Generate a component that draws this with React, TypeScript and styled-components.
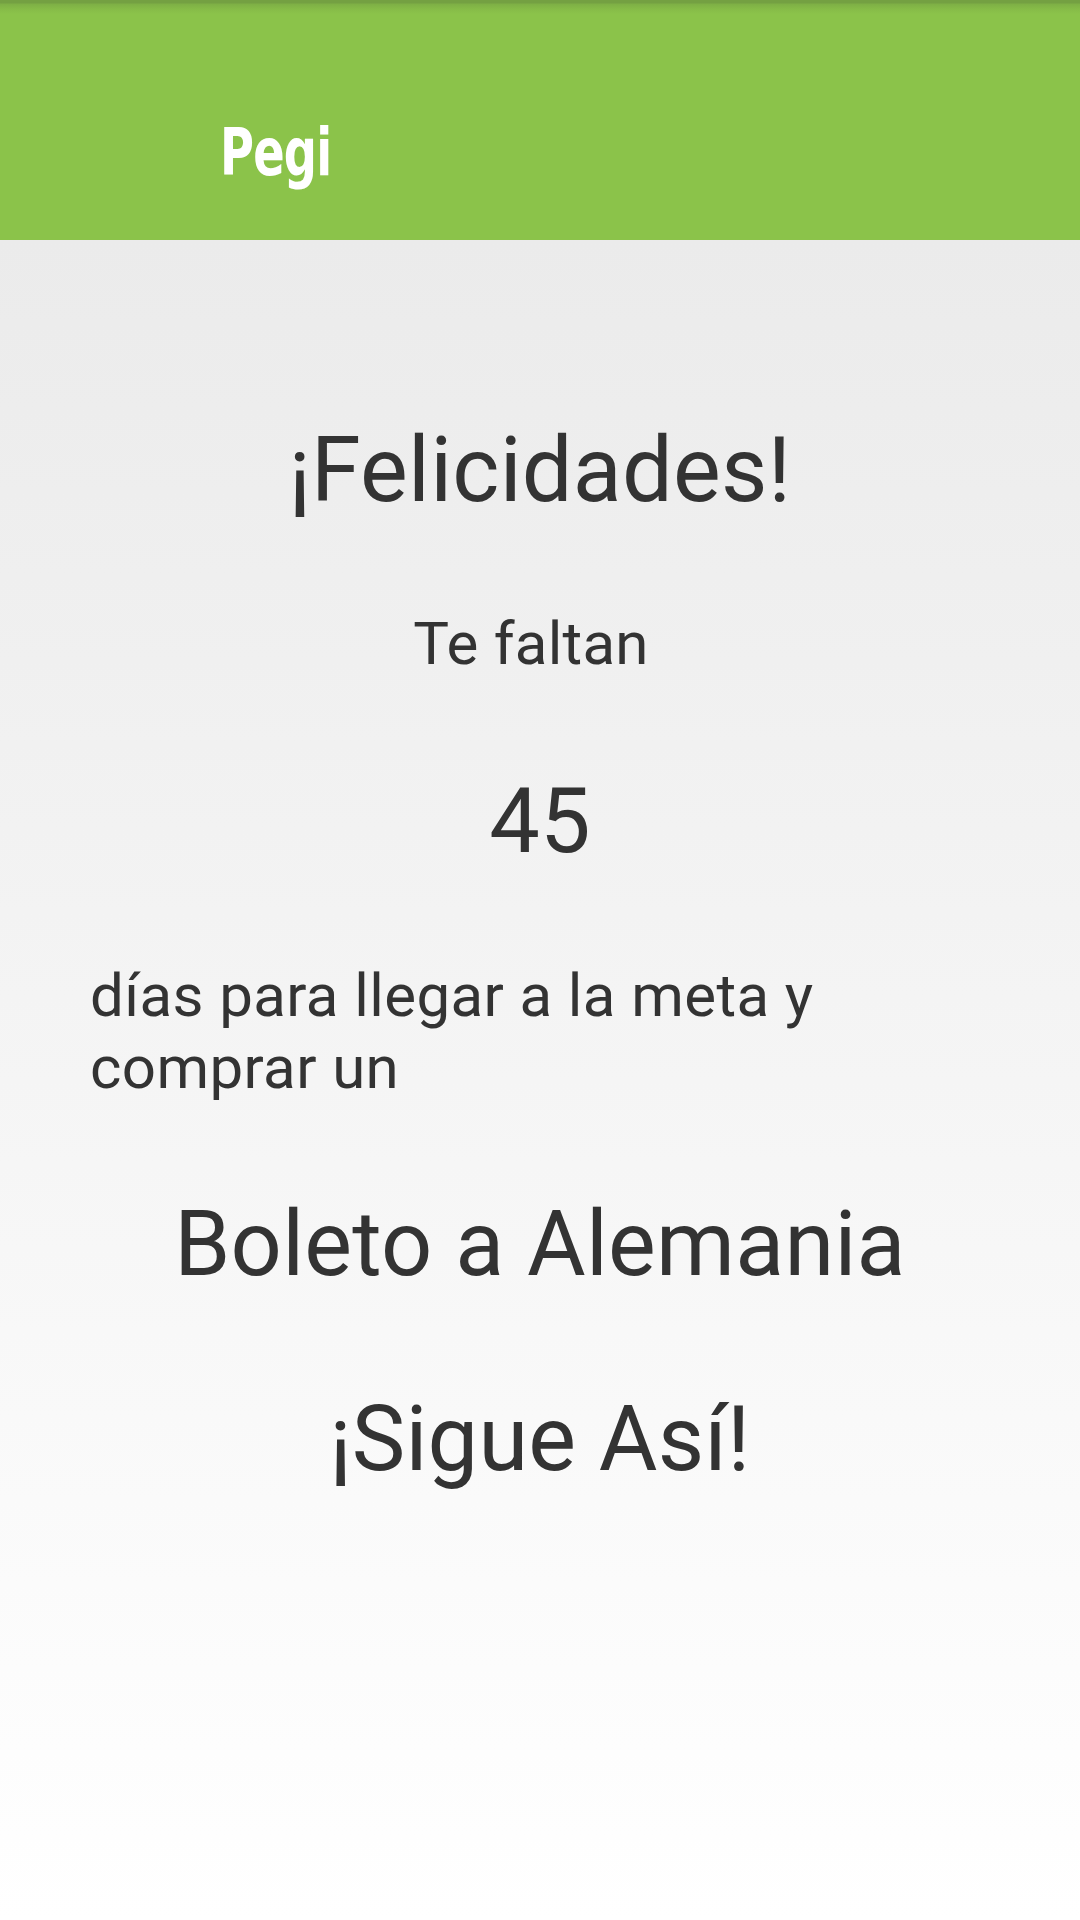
import React from "react";
import styled, { createGlobalStyle } from "styled-components";

const GlobalStyle = createGlobalStyle`
  html, body {
    margin: 0;
    padding: 0;
  }
  body {
    width: 1080px;
    font-family: Roboto, "Liberation Sans", sans-serif;
  }
`;

const Screen = styled.div`
  width: 1080px;
  height: 1920px;
  overflow: hidden;
  display: flex;
  flex-direction: column;
  background: #ffffff;
`;

const ActionBar = styled.header`
  box-sizing: border-box;
  height: 240px;
  flex: none;
  padding: 120px 0 0 220px;
  background: linear-gradient(
    to bottom,
    #74a042 0px,
    #74a042 3px,
    #7eaf45 4px,
    #86bb48 9px,
    #8bc34a 14px,
    #8bc34a 100%
  );
`;

const Logo = styled.div`
  display: inline-block;
  font-family: "DejaVu Sans Condensed", "DejaVu Sans", sans-serif;
  font-stretch: condensed;
  font-weight: 700;
  font-size: 66px;
  line-height: 66px;
  color: #ffffff;
  letter-spacing: -1px;
  transform: scaleX(0.78);
  transform-origin: left center;
`;

const Content = styled.main`
  flex: 1;
  display: flex;
  flex-direction: column;
  align-items: center;
  background: linear-gradient(to bottom, #ebebeb 0%, #ffffff 100%);
  color: #333333;
  letter-spacing: 0.25px;
`;

const Line = styled.div<{ $size: number; $top: number; $shift?: number }>`
  margin-top: ${(p) => p.$top}px;
  font-size: ${(p) => p.$size}px;
  line-height: ${(p) => Math.round(p.$size * 1.167)}px;
  text-align: center;
  padding-right: ${(p) => (p.$shift ?? 0) * 2}px;
  white-space: nowrap;
`;

const Paragraph = styled.p`
  align-self: stretch;
  box-sizing: border-box;
  margin: 86px 0 0;
  padding: 0 90px;
  font-size: 60px;
  line-height: 72px;
  text-align: left;
  letter-spacing: 0.4px;
`;

export default function App() {
  return (
    <>
      <GlobalStyle />
      <Screen>
        <ActionBar>
          <Logo>Pegi</Logo>
        </ActionBar>
        <Content>
          <Line $size={90} $top={178}>¡Felicidades!</Line>
          <Line $size={60} $top={86} $shift={9}>Te faltan</Line>
          <Line $size={90} $top={90}>45</Line>
          <Paragraph>días para llegar a la meta y comprar un</Paragraph>
          <Line $size={90} $top={88}>Boleto a Alemania</Line>
          <Line $size={90} $top={90}>¡Sigue Así!</Line>
        </Content>
      </Screen>
    </>
  );
}
